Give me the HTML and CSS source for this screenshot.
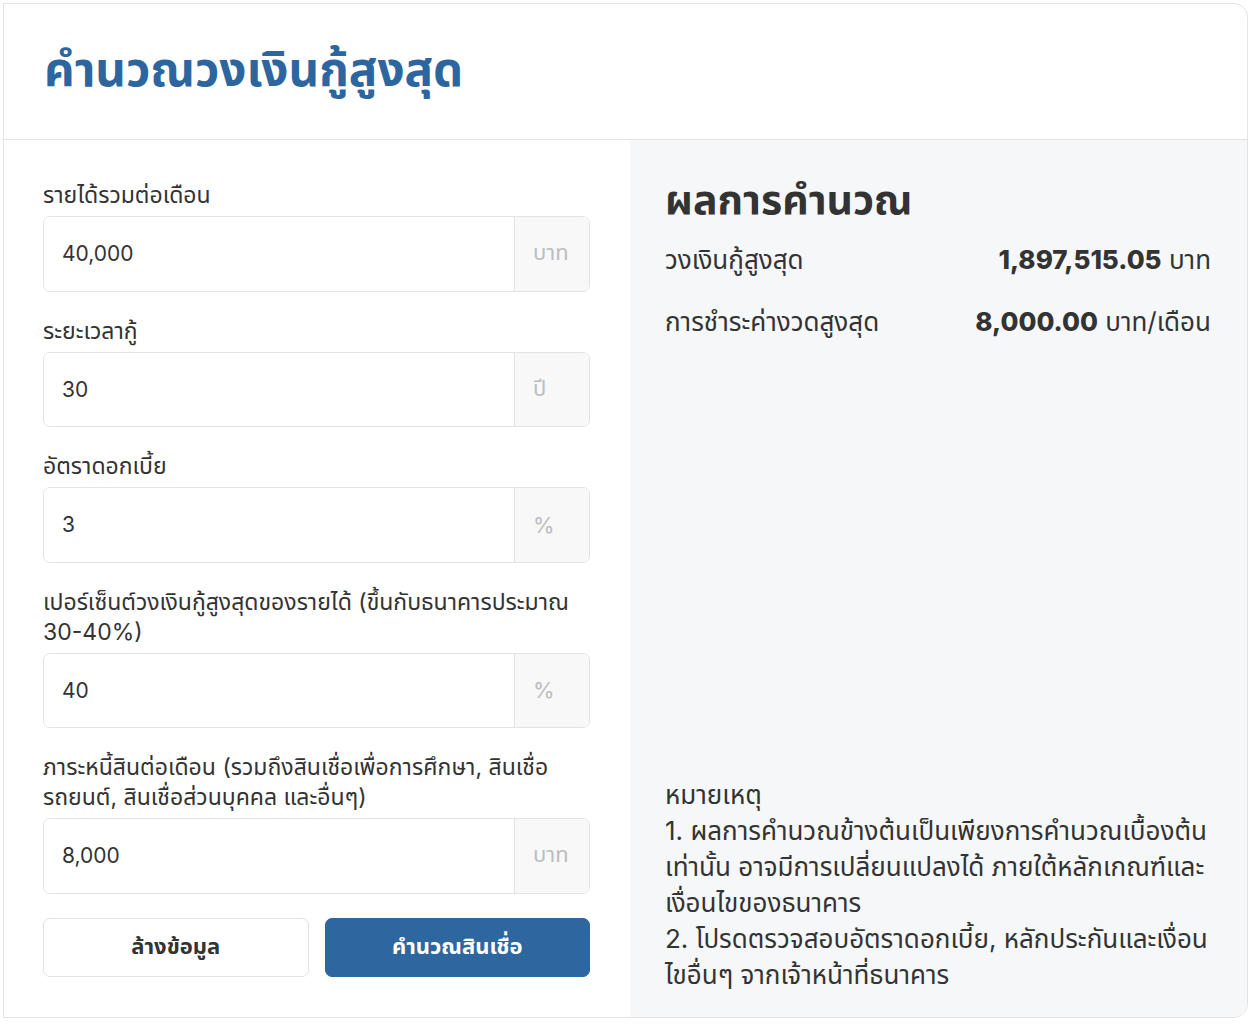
FILE: index.html
```html
<!DOCTYPE html>
<html lang="th">
<head>
  <meta charset="UTF-8">
  <meta name="viewport" content="width=device-width, initial-scale=1.0">
  <title>คำนวณวงเงินกู้สูงสุด</title>
  <link rel="stylesheet" href="styles.css">
</head>
<body>

  <div class="card">
    <div class="card-header">
      <h1>คำนวณวงเงินกู้สูงสุด</h1>
    </div>

    <div class="card-body">
      <form class="calc-form" onsubmit="return false;">
        <div class="field">
          <label for="income">รายได้รวมต่อเดือน</label>
          <div class="input-group">
            <input type="text" id="income" value="40,000">
            <span class="suffix">บาท</span>
          </div>
        </div>

        <div class="field">
          <label for="years">ระยะเวลากู้</label>
          <div class="input-group">
            <input type="text" id="years" value="30">
            <span class="suffix">ปี</span>
          </div>
        </div>

        <div class="field">
          <label for="rate">อัตราดอกเบี้ย</label>
          <div class="input-group">
            <input type="text" id="rate" value="3">
            <span class="suffix">%</span>
          </div>
        </div>

        <div class="field">
          <label for="percent">เปอร์เซ็นต์วงเงินกู้สูงสุดของรายได้ (ขึ้นกับธนาคารประมาณ 30-40%)</label>
          <div class="input-group">
            <input type="text" id="percent" value="40">
            <span class="suffix">%</span>
          </div>
        </div>

        <div class="field">
          <label for="debt">ภาระหนี้สินต่อเดือน (รวมถึงสินเชื่อเพื่อการศึกษา, สินเชื่อรถยนต์, สินเชื่อส่วนบุคคล และอื่นๆ)</label>
          <div class="input-group">
            <input type="text" id="debt" value="8,000">
            <span class="suffix">บาท</span>
          </div>
        </div>

        <div class="buttons">
          <button type="reset" class="btn btn-clear">ล้างข้อมูล</button>
          <button type="submit" class="btn btn-primary">คำนวณสินเชื่อ</button>
        </div>
      </form>

      <div class="result">
        <h2>ผลการคำนวณ</h2>
        <div class="result-row">
          <span>วงเงินกู้สูงสุด</span>
          <span><b>1,897,515.05</b> บาท</span>
        </div>
        <div class="result-row">
          <span>การชำระค่างวดสูงสุด</span>
          <span><b>8,000.00</b> บาท/เดือน</span>
        </div>

        <div class="note">
          <p>หมายเหตุ</p>
          <p>1. ผลการคำนวณข้างต้นเป็นเพียงการคำนวณเบื้องต้นเท่านั้น อาจมีการเปลี่ยนแปลงได้ ภายใต้หลักเกณฑ์และเงื่อนไขของธนาคาร</p>
          <p>2. โปรดตรวจสอบอัตราดอกเบี้ย, หลักประกันและเงื่อนไขอื่นๆ จากเจ้าหน้าที่ธนาคาร</p>
        </div>
      </div>
    </div>
  </div>

</body>
</html>
```

FILE: styles.css
```css
body {
  font-family: "Inter", "Noto Sans Thai", "Noto Sans", sans-serif;
  margin: 0;
  padding: 3px;
  background: #ffffff;
  color: #333333;
}
.card {
  width: 1245px;
  border: 1px solid #e3e3e3;
  border-radius: 0 14px 14px 0;
  overflow: hidden;
  box-sizing: border-box;
}
.card-header {
  height: 135px;
  padding: 0 40px;
  display: flex;
  align-items: center;
  border-bottom: 1px solid #e3e3e3;
}
.card-header h1 {
  margin: 0;
  font-size: 47.5px;
  font-weight: 700;
  color: #2d669e;
}
.card-body {
  display: grid;
  grid-template-columns: 626px 1fr;
}
.calc-form {
  padding: 40px 40px 40px 39px;
  display: flex;
  flex-direction: column;
  gap: 24px;
}
.field label {
  display: block;
  font-size: 23px;
  line-height: 30px;
  margin-bottom: 6px;
}
.input-group {
  display: flex;
  height: 75.5px;
  border: 1px solid #e3e3e3;
  border-radius: 7px;
  overflow: hidden;
  box-sizing: border-box;
}
.input-group input {
  flex: 1;
  border: none;
  outline: none;
  padding: 0 18px;
  font-family: inherit;
  font-size: 21px;
  color: #333333;
  min-width: 0;
}
.suffix {
  width: 75px;
  box-sizing: border-box;
  padding: 0 18px;
  display: flex;
  align-items: center;
  background: #f8f8f8;
  border-left: 1px solid #e3e3e3;
  color: #bdbdbd;
  font-size: 22px;
}
.buttons {
  display: grid;
  grid-template-columns: 1fr 1fr;
  gap: 16px;
}
.btn {
  height: 59px;
  border-radius: 7px;
  font-family: inherit;
  font-size: 22px;
  font-weight: 700;
  cursor: pointer;
}
.btn-clear {
  background: #ffffff;
  border: 1px solid #e3e3e3;
  color: #333333;
}
.btn-primary {
  background: #2e67a0;
  border: 1px solid #2e67a0;
  color: #ffffff;
}
.result {
  background: #f6f7f9;
  padding: 35px 36px 24px 35px;
  display: flex;
  flex-direction: column;
}
.result h2 {
  margin: 0 0 6px;
  font-size: 41px;
  font-weight: 700;
  line-height: 48px;
  color: #333333;
}
.result-row {
  display: flex;
  justify-content: space-between;
  align-items: baseline;
  font-size: 26px;
  line-height: 62px;
}
.result-row b {
  font-weight: 800;
}
.note {
  margin-top: auto;
  font-size: 26px;
  line-height: 36px;
}
.note p {
  margin: 0;
}
```
